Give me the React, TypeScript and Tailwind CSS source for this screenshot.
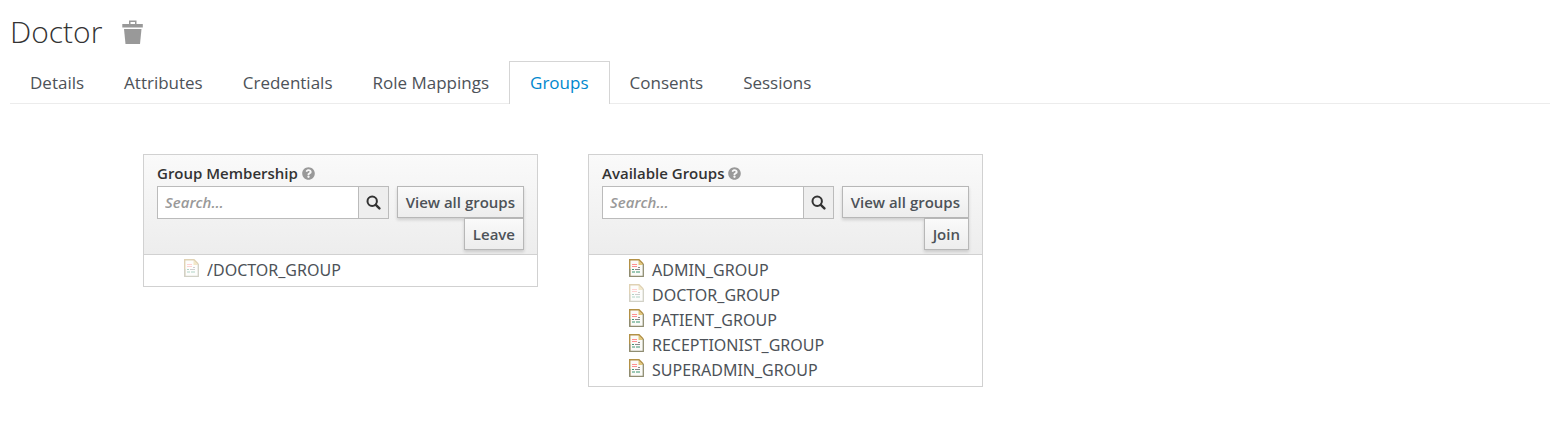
import { ReactNode } from 'react';
import { FaQuestionCircle } from 'react-icons/fa';

const tabs = [
  'Details',
  'Attributes',
  'Credentials',
  'Role Mappings',
  'Groups',
  'Consents',
  'Sessions',
];

function TrashIcon() {
  return (
    <svg width="21" height="24" viewBox="0 0 21 24" aria-hidden="true" fill="#999999">
      <path d="M0.300 4H7V0.500h7.500V4h6.300v3.500H0.300ZM8.500 2v2h4.500V2Z" fillRule="evenodd" />
      <path d="M2 9h17.500L18 24H3.500Z" />
    </svg>
  );
}

function SearchIcon() {
  return (
    <svg
      width="15"
      height="15"
      viewBox="0 0 15 15"
      aria-hidden="true"
      fill="none"
      stroke="currentColor"
    >
      <circle cx="6.200" cy="6.200" r="4.700" strokeWidth="2" />
      <path d="M9.800 9.800l3.600 3.600" strokeWidth="2.400" strokeLinecap="round" />
    </svg>
  );
}

function DocumentIcon({ faded = false }: { faded?: boolean }) {
  return (
    <svg
      width="15"
      height="18"
      viewBox="0 0 15 18"
      aria-hidden="true"
      className={faded ? 'shrink-0 opacity-40' : 'shrink-0'}
    >
      <path d="M1 1h9l4 4v12H1Z" fill="#fbfbf8" />
      <path d="M9.500 1v5h4.500Z" fill="#e3c878" />
      <path d="M0.700 17V0.700H10L14.200 5" fill="none" stroke="#b39146" strokeWidth="1.400" />
      <path d="M14.300 5v12.300H0.700V10" fill="none" stroke="#8f8d72" strokeWidth="1.300" />
      <path d="M3 5.500h5M3 7.500h5" stroke="#ff9090" strokeWidth="1" />
      <path d="M9 8.500h2M6 10.500h5" stroke="#8a8a8a" strokeWidth="1" />
      <path d="M3 10.500h2M3 13h3M7 13h4" stroke="#3d9673" strokeWidth="1.200" />
    </svg>
  );
}

function PanelButton({ children }: { children: ReactNode }) {
  return (
    <button
      type="button"
      className="h-8 border border-[#b7b7b7] bg-linear-to-b from-[#fafafa] to-[#ededed] px-2 text-[15px] leading-5 font-semibold text-[#4d5258] shadow-[0_2px_3px_rgba(3,3,3,0.15)]"
    >
      {children}
    </button>
  );
}

type Group = { name: string; faded?: boolean };

function GroupPanel({
  id,
  title,
  action,
  groups,
}: {
  id: string;
  title: string;
  action: string;
  groups: Group[];
}) {
  return (
    <section className="max-w-[395px] min-w-0 flex-1 border border-[#d1d1d1]">
      <header className="border-b border-[#d1d1d1] bg-linear-to-b from-[#fafafa] to-[#ededed] px-[13px] pt-1.5 pb-1">
        <label
          htmlFor={id}
          className="mb-px flex h-6 items-center gap-1 text-[15px] leading-6 font-semibold text-[#333333]"
        >
          {title}
          <FaQuestionCircle size={13} color="#999999" />
        </label>
        <div className="flex items-start gap-2">
          <div className="flex h-[33px] min-w-0 flex-1 border border-[#bbbbbb] bg-white">
            <input
              id={id}
              type="text"
              placeholder="Search..."
              className="min-w-0 flex-1 px-[7px] text-[15px] text-[#333333] outline-none placeholder:font-semibold placeholder:text-[#999999] placeholder:italic"
            />
            <button
              type="button"
              aria-label="Search"
              className="flex w-[30px] items-center justify-center border-l border-[#bbbbbb] bg-[#eeeeee] text-[#333333]"
            >
              <SearchIcon />
            </button>
          </div>
          <PanelButton>View all groups</PanelButton>
        </div>
        <div className="-mt-px flex justify-end">
          <PanelButton>{action}</PanelButton>
        </div>
      </header>
      <ul className="pt-1 pb-0.5">
        {groups.map((group) => (
          <li key={group.name} className="flex h-[25px] items-start gap-2 pl-10">
            <DocumentIcon faded={group.faded} />
            <span className="font-['Noto_Sans',sans-serif] text-base leading-[22px] text-[#4d5258]">
              {group.name}
            </span>
          </li>
        ))}
      </ul>
    </section>
  );
}

export default function App() {
  return (
    <main className="bg-white pt-3 pl-[10px] font-['Open_Sans',sans-serif] text-[#4d5258]">
      <div className="flex h-10 items-center gap-5">
        <h1 className="text-[30px] leading-10 font-light text-[#333333]">Doctor</h1>
        <button type="button" aria-label="Delete user">
          <TrashIcon />
        </button>
      </div>
      <nav className="mt-[9px] border-b border-[#ececec]">
        <ul className="-mb-px flex">
          {tabs.map((tab) => (
            <li key={tab}>
              <a
                href="#"
                aria-current={tab === 'Groups' ? 'page' : undefined}
                className={
                  tab === 'Groups'
                    ? 'block h-[43px] border border-b-0 border-[#d5d5d5] bg-white px-5 text-[17px] leading-[41px] text-[#0088ce]'
                    : 'block h-[43px] px-5 pt-px text-[17px] leading-[41px]'
                }
              >
                {tab}
              </a>
            </li>
          ))}
        </ul>
      </nav>
      <div className="flex items-start gap-[50px] pt-[50px] pl-[133px]">
        <GroupPanel
          id="membership-search"
          title="Group Membership"
          action="Leave"
          groups={[{ name: '/DOCTOR_GROUP', faded: true }]}
        />
        <GroupPanel
          id="available-search"
          title="Available Groups"
          action="Join"
          groups={[
            { name: 'ADMIN_GROUP' },
            { name: 'DOCTOR_GROUP', faded: true },
            { name: 'PATIENT_GROUP' },
            { name: 'RECEPTIONIST_GROUP' },
            { name: 'SUPERADMIN_GROUP' },
          ]}
        />
      </div>
    </main>
  );
}
